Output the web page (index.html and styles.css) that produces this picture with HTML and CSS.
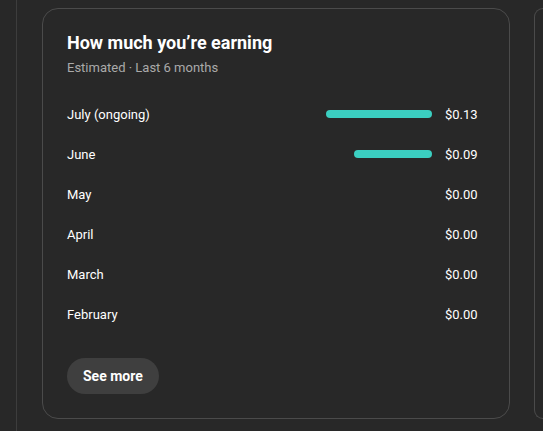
FILE: index.html
```html
<!DOCTYPE html>
<html lang="en">
<head>
    <meta charset="UTF-8">
    <title>Earnings</title>
    <link rel="stylesheet" href="styles.css">
</head>
<body>
    <div class="rail"></div>
    <div class="card">
        <h2 class="card-title">How much you’re earning</h2>
        <p class="card-sub">Estimated · Last 6 months</p>
        <div class="rows">
            <div class="row">
                <span class="month">July (ongoing)</span>
                <span class="bar" style="width: 106px"></span>
                <span class="amount">$0.13</span>
            </div>
            <div class="row">
                <span class="month">June</span>
                <span class="bar" style="width: 78px"></span>
                <span class="amount">$0.09</span>
            </div>
            <div class="row">
                <span class="month">May</span>
                <span class="bar"></span>
                <span class="amount">$0.00</span>
            </div>
            <div class="row">
                <span class="month">April</span>
                <span class="bar"></span>
                <span class="amount">$0.00</span>
            </div>
            <div class="row">
                <span class="month">March</span>
                <span class="bar"></span>
                <span class="amount">$0.00</span>
            </div>
            <div class="row">
                <span class="month">February</span>
                <span class="bar"></span>
                <span class="amount">$0.00</span>
            </div>
        </div>
        <button class="more-btn" type="button">See more</button>
    </div>
    <div class="card next"></div>
</body>
</html>
```

FILE: styles.css
```css
body {
    margin: 0;
    background: #282828;
    font-family: Roboto, "Liberation Sans", sans-serif;
    color: #f1f1f1;
    display: flex;
    align-items: flex-start;
    height: 431px;
    overflow: hidden;
}
.rail {
    width: 16px;
    height: 431px;
    border-right: 1px solid #3d3d3d;
    flex-shrink: 0;
}
.card {
    box-sizing: border-box;
    margin-top: 8px;
    margin-left: 25px;
    width: 468px;
    height: 411px;
    flex-shrink: 0;
    border: 1px solid #4b4b4b;
    border-radius: 16px;
    padding: 22px 32px 0 24px;
}
.card.next {
    margin-left: 24px;
    width: 9px;
    padding: 0;
    border-right: none;
    border-radius: 16px 0 0 16px;
}
.card-title {
    margin: 0;
    font-size: 18px;
    font-weight: 700;
    line-height: 24px;
    color: #fff;
}
.card-sub {
    margin: 4px 0 0;
    font-size: 13px;
    line-height: 18px;
    color: #aaaaaa;
}
.rows {
    margin-top: 17px;
}
.row {
    display: flex;
    align-items: center;
    height: 40px;
    font-size: 13px;
    font-weight: 400;
    color: #fff;
}
.month {
    flex: 1;
}
.bar {
    height: 8px;
    border-radius: 4px;
    background: #3bcfc1;
    margin-right: 13px;
}
.amount {
    width: 32px;
    text-align: right;
}
.more-btn {
    margin-top: 24px;
    height: 36px;
    padding: 0 16px;
    border: none;
    border-radius: 18px;
    background: #3f3f3f;
    color: #fff;
    font-family: inherit;
    font-size: 14px;
    font-weight: 700;
    cursor: pointer;
}
```
